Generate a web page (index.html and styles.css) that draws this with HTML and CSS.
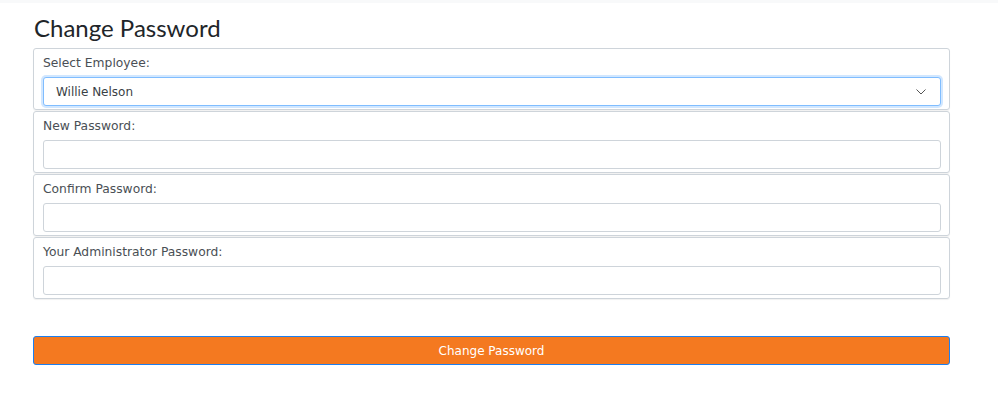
FILE: index.html
```html
<!DOCTYPE html>
<html>
<head>
<meta charset="utf-8">
<link rel="stylesheet" href="styles.css">
</head>
<body>
<div class="topbar"></div>
<main class="page">
  <h1 class="title">Change Password</h1>
  <form class="form">
    <div class="panel">
      <label class="label">Select Employee:</label>
      <div class="select focused">
        <span>Willie Nelson</span>
        <svg class="chev" width="10" height="6" viewBox="0 0 10 6"><path d="M0.5 0.5 L5 5 L9.5 0.5" fill="none" stroke="#555" stroke-width="1"/></svg>
      </div>
    </div>
    <div class="panel">
      <label class="label">New Password:</label>
      <input class="input" type="password">
    </div>
    <div class="panel">
      <label class="label">Confirm Password:</label>
      <input class="input" type="password">
    </div>
    <div class="panel">
      <label class="label">Your Administrator Password:</label>
      <input class="input" type="password">
    </div>
    <button class="btn" type="button">Change Password</button>
  </form>
</main>
</body>
</html>
```
FILE: styles.css
```css
html, body { margin: 0; padding: 0; background: #fff; }
body { font-family: "DejaVu Sans", Verdana, sans-serif; }
.topbar { height: 3px; background: #f8f9fa; }
.page { padding-left: 33px; width: 917px; }
.title {
  margin: 0;
  height: 45px;
  padding-top: 10px;
  box-sizing: border-box;
  font-family: Lato, "Noto Sans", sans-serif;
  font-weight: 400;
  font-size: 24px;
  line-height: 30px;
  color: #212529;
  padding-left: 1px;
}
.form { display: flex; flex-direction: column; gap: 1px; }
.panel {
  border: 1px solid #ced4da;
  border-radius: 3px;
  padding: 6px 8px 3px 9px;
  display: flex;
  flex-direction: column;
  box-shadow: 0 1px 1px rgba(0,0,0,0.06);
}
.label {
  font-size: 12.3px;
  line-height: 16px;
  color: #4a4f55;
  margin-bottom: 6px;
}
.input, .select {
  box-sizing: border-box;
  height: 29px;
  border: 1px solid #ced4da;
  border-radius: 3px;
  background: #fff;
  width: 100%;
  margin: 0;
}
.select {
  display: flex;
  align-items: center;
  justify-content: space-between;
  padding: 0 14px 0 12px;
  font-size: 12px;
  color: #3a3f45;
}
.focused {
  border-color: #80bdff;
  box-shadow: 0 0 0 2px rgba(0,123,255,0.18);
}
.btn {
  margin-top: 36px;
  height: 29px;
  background: #f47920;
  border: 1px solid #1b7ff0;
  border-radius: 3px;
  color: #fff;
  font-family: "DejaVu Sans", Verdana, sans-serif;
  font-size: 12px;
  padding: 0;
}
```
